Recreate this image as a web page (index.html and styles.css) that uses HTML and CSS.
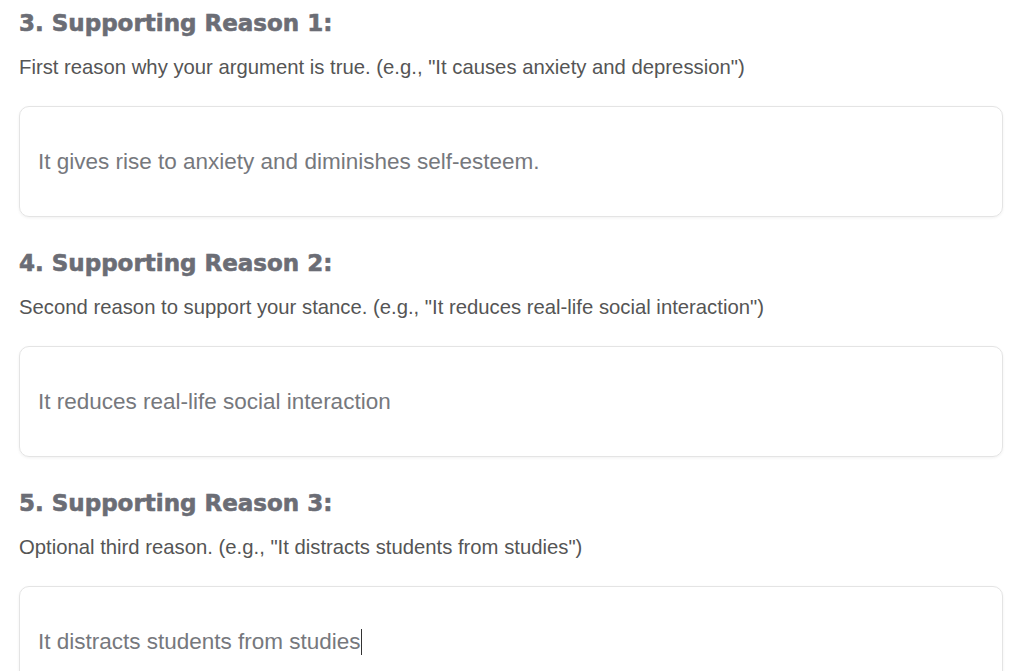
FILE: index.html
```html
<!DOCTYPE html>
<html>
    <head>
        <link rel="stylesheet" href="styles.css">
    </head>
 <body>
    <div class="form">
        <div class="step">
            <h2 class="step-title">3. Supporting Reason 1:</h2>
            <p class="hint">First reason why your argument is true. (e.g., "It causes anxiety and depression")</p>
            <div class="field">It gives rise to anxiety and diminishes self-esteem.</div>
        </div>
        <div class="step">
            <h2 class="step-title">4. Supporting Reason 2:</h2>
            <p class="hint">Second reason to support your stance. (e.g., "It reduces real-life social interaction")</p>
            <div class="field">It reduces real-life social interaction</div>
        </div>
        <div class="step">
            <h2 class="step-title">5. Supporting Reason 3:</h2>
            <p class="hint">Optional third reason. (e.g., "It distracts students from studies")</p>
            <div class="field">It distracts students from studies<span class="caret"></span></div>
        </div>
    </div>
 </body>
</html>
```

FILE: styles.css
```css
body{
    margin: 0;
    background: #ffffff;
    font-family: "Liberation Sans", Arial, sans-serif;
}
.form{
    padding: 9px 21px 0 19px;
}
.step{
    height: 240px;
}
.step-title{
    font-family: "DejaVu Sans", sans-serif;
    font-weight: bold;
    font-size: 23px;
    color: #6b6d75;
    -webkit-text-stroke: 0.6px #6b6d75;
    margin: 0;
    line-height: 28px;
}
.hint{
    font-size: 20.3px;
    color: #555555;
    margin: 18px 0 0 0;
    line-height: 24px;
}
.field{
    margin-top: 27px;
    height: 109px;
    border: 1px solid #e4e4e4;
    border-radius: 10px;
    box-shadow: 0 1px 3px rgba(0,0,0,0.06);
    padding: 0 18px;
    display: flex;
    align-items: center;
    font-size: 22.5px;
    color: #76787d;
}
.caret{
    display: inline-block;
    width: 1px;
    height: 26px;
    background: #333333;
}
```
